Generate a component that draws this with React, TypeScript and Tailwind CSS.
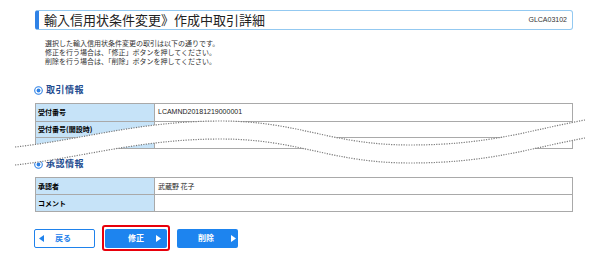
import React from "react";

const jp = { fontFamily: '"Noto Sans CJK JP", "Noto Sans", sans-serif' };
const lat = { fontFamily: '"Liberation Sans", "Noto Sans CJK JP", sans-serif' };

function Tri({ dir, color }: { dir: "left" | "right"; color: string }) {
  return (
    <svg width="5" height="7" viewBox="0 0 5 7" className="shrink-0">
      {dir === "left" ? (
        <polygon points="5,0 5,7 0,3.5" fill={color} />
      ) : (
        <polygon points="0,0 0,7 5,3.5" fill={color} />
      )}
    </svg>
  );
}

function SectionHeading({ title }: { title: string }) {
  return (
    <div className="flex items-center h-[10px] ml-[34px]">
      <svg width="9" height="9" viewBox="0 0 9 9" className="shrink-0">
        <circle cx="4.5" cy="4.5" r="3.8" fill="white" stroke="#2f82e6" strokeWidth="1.1" />
        <circle cx="4.5" cy="4.5" r="1.9" fill="#2f82e6" />
      </svg>
      <span className="ml-[3px] text-[9px] leading-[10px] font-bold text-[#1f4d91] tracking-[0.5px]" style={jp}>
        {title}
      </span>
    </div>
  );
}

function Row({ label, value, h }: { label: string; value?: string; h: string }) {
  return (
    <div className={`flex border-b border-[#a9a9a9] ${h}`}>
      <div
        className="w-[119px] shrink-0 bg-[#c6e3f8] border-r border-[#a9a9a9] flex items-center pl-[2px] text-[7px] font-bold text-black whitespace-nowrap"
        style={jp}
      >
        {label}
      </div>
      <div className="flex-1 flex items-center pl-[3px] text-[7px] text-[#222]" style={jp}>
        {value}
      </div>
    </div>
  );
}

export default function App() {
  const upper = "M15,147 C80,140 140,121 220,121 C300,121 330,145 410,145 C490,145 530,130 585,120";
  const lower = "M15,165 C80,158 140,139 220,139 C300,139 330,163 410,163 C490,163 530,148 585,138";
  const fill =
    "M15,147 C80,140 140,121 220,121 C300,121 330,145 410,145 C490,145 530,130 585,120 L585,138 C530,148 490,163 410,163 C330,163 300,139 220,139 C140,139 80,158 15,165 Z";

  return (
    <div className="relative w-[600px] h-[263px] overflow-hidden bg-white">
      <div className="pt-[10px]">
        {/* Title bar */}
        <div className="mx-[35px] w-[538px] h-[20px] flex items-center justify-between border border-[#93c9f1] border-l-[4px] border-l-[#2f82e6] rounded-[3px] pl-[5px] pr-[5px]">
          <span className="text-[13px] leading-[18px] text-[#222] whitespace-nowrap" style={jp}>
            輸入信用状条件変更》作成中取引詳細
          </span>
          <span className="text-[7px] text-[#333]" style={lat}>
            GLCA03102
          </span>
        </div>

        {/* Description */}
        <div className="mt-[9px] ml-[45px] text-[7px] leading-[9px] text-[#333]" style={jp}>
          <div>選択した輸入信用状条件変更の取引は以下の通りです。</div>
          <div>修正を行う場合は、「修正」ボタンを押してください。</div>
          <div>削除を行う場合は、「削除」ボタンを押してください。</div>
        </div>

        <div className="mt-[19px]">
          <SectionHeading title="取引情報" />
        </div>

        <div className="mt-[8px] ml-[35px] w-[538px] border-t border-x border-[#a9a9a9]">
          <div className="flex border-b border-[#a9a9a9] h-[18px]">
            <div
              className="w-[119px] shrink-0 bg-[#c6e3f8] border-r border-[#a9a9a9] flex items-center pl-[2px] text-[7px] font-bold text-black"
              style={jp}
            >
              受付番号
            </div>
            <div className="flex-1 flex items-center pl-[3px] text-[7px] text-[#222]" style={lat}>
              LCAMND20181219000001
            </div>
          </div>
          <Row label="受付番号(開設時)" h="h-[16px]" />
          <Row label="" h="h-[11px]" />
        </div>

        <div className="mt-[10px]">
          <SectionHeading title="承認情報" />
        </div>

        <div className="mt-[8px] ml-[35px] w-[538px] border-t border-x border-[#a9a9a9]">
          <Row label="承認者" value="武蔵野 花子" h="h-[17px]" />
          <Row label="コメント" h="h-[17px]" />
        </div>

        {/* Buttons */}
        <div className="mt-[13px] ml-[34px] flex items-center">
          <div className="w-[61px] h-[19px] shrink-0 bg-white border-[1.5px] border-[#1f82ec] rounded-[2px] flex items-center pl-[4px] text-[#1f82ec] whitespace-nowrap">
            <Tri dir="left" color="#1f82ec" />
            <span className="ml-[11px] text-[8px] font-bold leading-none" style={jp}>
              戻る
            </span>
          </div>
          <div className="ml-[7px] w-[68px] h-[26px] shrink-0 border-[2.5px] border-[#e8000b] rounded-[3px] flex items-center justify-center">
            <div className="w-[62px] h-[19px] shrink-0 bg-[#1d84ef] rounded-[2px] flex items-center text-white whitespace-nowrap">
              <span className="ml-[23px] text-[8px] font-bold leading-none" style={jp}>
                修正
              </span>
              <span className="ml-[12px] flex">
                <Tri dir="right" color="#ffffff" />
              </span>
            </div>
          </div>
          <div className="ml-[7px] w-[61px] h-[19px] shrink-0 bg-[#1d84ef] rounded-[2px] flex items-center text-white whitespace-nowrap">
            <span className="ml-[21px] text-[8px] font-bold leading-none" style={jp}>
              削除
            </span>
            <span className="ml-[17px] flex">
              <Tri dir="right" color="#ffffff" />
            </span>
          </div>
        </div>
      </div>

      {/* Break marks overlay */}
      <svg
        className="absolute left-0 top-0 pointer-events-none"
        width="600"
        height="263"
        viewBox="0 0 600 263"
      >
        <path d={fill} fill="white" />
        <path d={upper} fill="none" stroke="#7a7a7a" strokeWidth="1.2" strokeDasharray="1.2 1.3" />
        <path d={lower} fill="none" stroke="#7a7a7a" strokeWidth="1.2" strokeDasharray="1.2 1.3" />
      </svg>
    </div>
  );
}
